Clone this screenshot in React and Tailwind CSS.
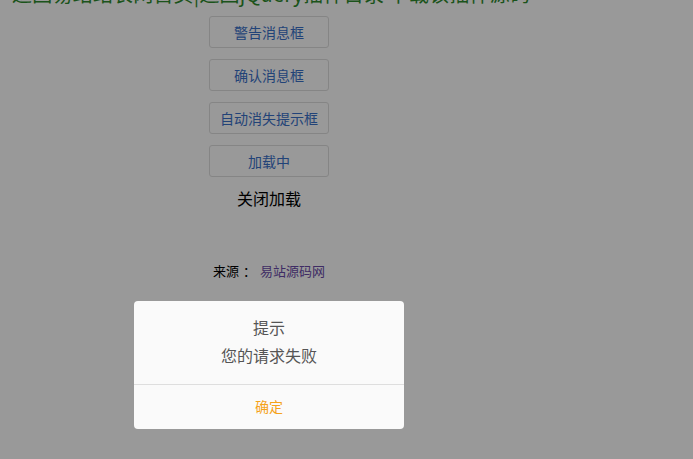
import React from "react";

const buttons = ["警告消息框", "确认消息框", "自动消失提示框", "加载中"];

const App = () => {
  return (
    <div
      className="relative w-[693px] h-[459px] overflow-hidden bg-white"
      style={{ fontFamily: '"Microsoft YaHei", "Noto Sans CJK SC", sans-serif' }}
    >
      {/* page content */}
      <div className="w-[538px] flex flex-col items-center">
        <div className="self-start pl-[12px] mt-[-21px] text-[20px] leading-[30px] text-[#2e8b2e] whitespace-nowrap tracking-[0.2px]">
          返回易站站长网首页|返回jQuery插件目录 下载该插件源码
        </div>
        <div className="flex flex-col items-center gap-[11px] mt-[7px]">
          {buttons.map((b) => (
            <button
              key={b}
              className="w-[120px] h-[32px] border border-[#dedede] rounded-[3px] bg-white text-[14px] text-[#3a70c8]"
            >
              {b}
            </button>
          ))}
        </div>
        <div className="mt-[9px] text-[16px] leading-[24px] text-black">关闭加载</div>
        <div className="mt-[51px] text-[13px] leading-[20px] text-black">
          来源<span className="inline-block w-[21px] text-center">：</span>
          <span className="text-[#6a4aa8]">易站源码网</span>
        </div>
      </div>

      {/* overlay */}
      <div className="absolute inset-0 bg-black/40" />

      {/* dialog */}
      <div className="absolute left-[134px] top-[301px] w-[270px] h-[128px] bg-[#fafafa] rounded-[4px] flex flex-col">
        <div className="h-[83px] flex flex-col items-center pt-[14px]">
          <div className="text-[16px] leading-[24px] text-[#555]">提示</div>
          <div className="mt-[4px] text-[16px] leading-[24px] text-[#555]">您的请求失败</div>
        </div>
        <div className="flex-1 border-t border-[#dedede] flex items-center justify-center pb-[2px] text-[14px] text-[#f5a31a]">
          确定
        </div>
      </div>
    </div>
  );
};

export default App;
